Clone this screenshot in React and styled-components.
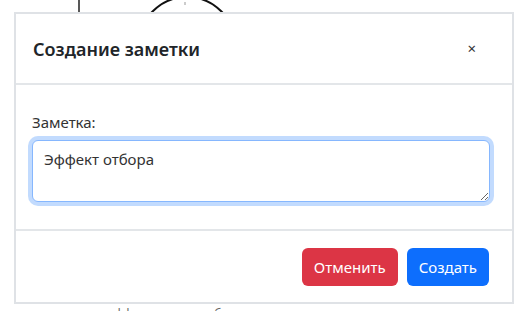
import styled, {createGlobalStyle} from "styled-components";

const Global = createGlobalStyle`
  html, body {
    margin: 0;
    background: #fff;
    font-family: "Noto Sans", "Open Sans", sans-serif;
  }
`;

function App() {
    return (
        <Page>
            <Global/>
            <Sketch width="531" height="14" viewBox="0 0 531 14">
                <line x1="79" y1="0" x2="79" y2="13" stroke="#111" strokeWidth="1.4"/>
                <circle cx="187" cy="45" r="48" fill="none" stroke="#111" strokeWidth="2"/>
                <line x1="185" y1="2" x2="185" y2="5" stroke="#999" strokeWidth="1"/>
            </Sketch>
            <BehindText>параметры эффективности отбора</BehindText>
            <Modal>
                <Header>
                    <Title>Создание заметки</Title>
                    <Close>×</Close>
                </Header>
                <Body>
                    <Label>Заметка:</Label>
                    <Note defaultValue="Эффект отбора"/>
                </Body>
                <Footer>
                    <Button $color="#dc3545">Отменить</Button>
                    <Button $color="#0d6efd">Создать</Button>
                </Footer>
            </Modal>
        </Page>
    );
}

const Page = styled.div`
  position: relative;
  width: 531px;
  height: 311px;
  overflow: hidden;
`;
const Sketch = styled.svg`
  display: block;
`;
const BehindText = styled.div`
  position: absolute;
  left: 40px;
  top: 305px;
  font-size: 12px;
  color: #666;
`;
const Modal = styled.div`
  position: absolute;
  left: 14px;
  top: 12px;
  width: 496px;
  height: 288px;
  border: 2px solid #dfe2e6;
  background: #fff;
  display: flex;
  flex-direction: column;
`;
const Header = styled.div`
  height: 69px;
  border-bottom: 2px solid #e3e6e9;
  display: flex;
  align-items: center;
  justify-content: space-between;
  padding: 0 36px 0 17px;
`;
const Title = styled.div`
  font-size: 18px;
  font-weight: 600;
  color: #212529;
`;
const Close = styled.div`
  font-size: 15px;
  color: #333;
  line-height: 1;
`;
const Body = styled.div`
  height: 146px;
  border-bottom: 2px solid #e3e6e9;
  padding: 27px 22px 0 16px;
  box-sizing: border-box;
`;
const Label = styled.div`
  font-size: 15px;
  color: #333;
  margin-bottom: 8px;
`;
const Note = styled.textarea`
  display: block;
  box-sizing: border-box;
  width: 458px;
  height: 62px;
  margin: 0;
  padding: 8px 11px;
  font-family: inherit;
  font-size: 15px;
  color: #333;
  border: 1px solid #86b7fe;
  border-radius: 6px;
  box-shadow: 0 0 0 4px rgba(13, 110, 253, 0.25);
  outline: none;
  resize: vertical;
`;
const Footer = styled.div`
  flex: 1;
  display: flex;
  align-items: center;
  justify-content: flex-end;
  gap: 9px;
  padding: 0 23px 0 0;
`;
const Button = styled.div`
  background: ${p => p.$color};
  color: #fff;
  font-size: 15px;
  height: 38px;
  padding: 0 12px;
  border-radius: 6px;
  display: flex;
  align-items: center;
`;

export default App;
